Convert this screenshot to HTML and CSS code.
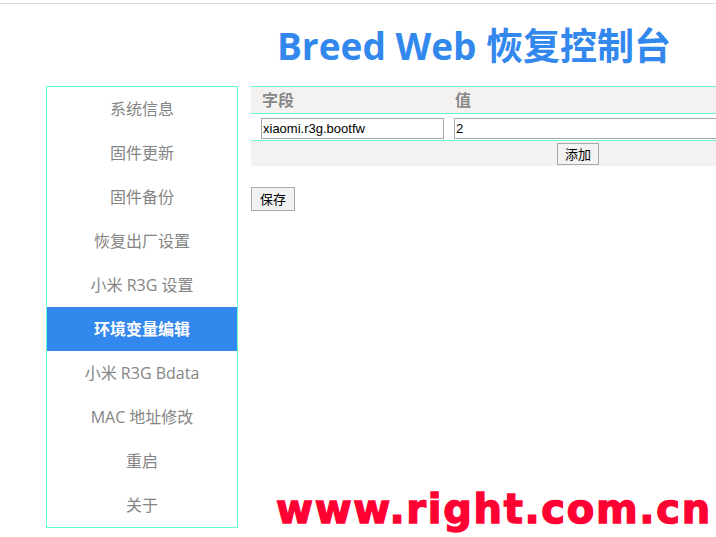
FILE: index.html
```html
<!DOCTYPE html>
<html lang="zh-CN">
<head>
<meta charset="utf-8">
<title>Breed Web 恢复控制台</title>
<link rel="stylesheet" href="styles.css">
</head>
<body>
<div class="topline"></div>
<header class="header"><h1 class="title">Breed Web 恢复控制台</h1></header>
<div class="layout">
  <nav class="sidebar">
    <a class="nav-item">系统信息</a>
    <a class="nav-item">固件更新</a>
    <a class="nav-item">固件备份</a>
    <a class="nav-item">恢复出厂设置</a>
    <a class="nav-item">小米 R3G 设置</a>
    <a class="nav-item active">环境变量编辑</a>
    <a class="nav-item">小米 R3G Bdata</a>
    <a class="nav-item">MAC 地址修改</a>
    <a class="nav-item">重启</a>
    <a class="nav-item">关于</a>
  </nav>
  <main class="main">
    <div class="envtable">
      <div class="row head">
        <div class="cell">字段</div>
        <div class="cell">值</div>
      </div>
      <div class="row data">
        <div class="cell"><input class="field" type="text" value="xiaomi.r3g.bootfw"></div>
        <div class="cell"><input class="field" type="text" value="2"></div>
      </div>
      <div class="row foot">
        <button class="btn">添加</button>
      </div>
    </div>
    <button class="btn save">保存</button>
  </main>
</div>
<div class="watermark">www.right.com.cn</div>
</body>
</html>
```
FILE: styles.css
```css
html, body {
  margin: 0;
  padding: 0;
  overflow: hidden;
  background: #fff;
  font-family: "Open Sans", "Noto Sans CJK SC", sans-serif;
}
.topline {
  height: 3px;
  border-bottom: 1px solid #dcdcdc;
}
.header {
  padding-left: 277px;
  height: 82px;
}
.title {
  margin: 0;
  padding-top: 18px;
  font-size: 37px;
  line-height: 47px;
  font-weight: bold;
  color: #3388ee;
  white-space: nowrap;
}
.layout {
  display: flex;
  gap: 13px;
  padding-left: 46px;
  align-items: flex-start;
}
.sidebar {
  width: 190px;
  flex: none;
  border: 1px solid #66ffcc;
  display: flex;
  flex-direction: column;
}
.nav-item {
  height: 44px;
  line-height: 44px;
  text-align: center;
  font-size: 16px;
  color: #858585;
  white-space: nowrap;
}
.nav-item.active {
  background: #3388ee;
  color: #fff;
  font-weight: bold;
}
.main {
  width: 654px;
  flex: none;
}
.envtable {
  border-top: 1px solid #66ffcc;
}
.row {
  display: grid;
  grid-template-columns: 193px 1fr;
}
.row.head {
  background: #f3f2f1;
  height: 26px;
  border-bottom: 1px solid #66ffcc;
}
.row.head .cell {
  padding-left: 11px;
  font-size: 16px;
  line-height: 26px;
  font-weight: bold;
  color: #888;
}
.row.data {
  height: 26px;
  border-bottom: 1px solid #66ffcc;
  align-items: center;
}
.row.data .cell {
  padding-left: 10px;
}
.field {
  box-sizing: border-box;
  width: 100%;
  height: 21px;
  margin: 0;
  border: 1px solid #a9a9a9;
  padding: 0 1px;
  font-family: "Liberation Sans", Arial, sans-serif;
  font-size: 13px;
  color: #000;
}
.row.data .cell:first-child .field {
  width: 183px;
}
.row.foot {
  display: flex;
  justify-content: center;
  align-items: center;
  height: 25px;
  background: #f3f2f1;
}
.btn {
  box-sizing: border-box;
  height: 22px;
  padding: 0 7px;
  border: 1px solid #a8a8a8;
  background: #f2f2f2;
  font-family: "Noto Sans CJK SC", sans-serif;
  font-size: 13px;
  line-height: 18px;
  color: #000;
}
.btn.save {
  margin-top: 21px;
  height: 24px;
  padding: 0 8px;
}
.watermark {
  position: absolute;
  left: 276px;
  top: 484px;
  font-family: "DejaVu Sans", sans-serif;
  font-weight: bold;
  font-size: 40px;
  line-height: 50px;
  letter-spacing: 1.7px;
  color: #ff0033;
  -webkit-text-stroke: 1.4px #ff0033;
  white-space: nowrap;
}
```
